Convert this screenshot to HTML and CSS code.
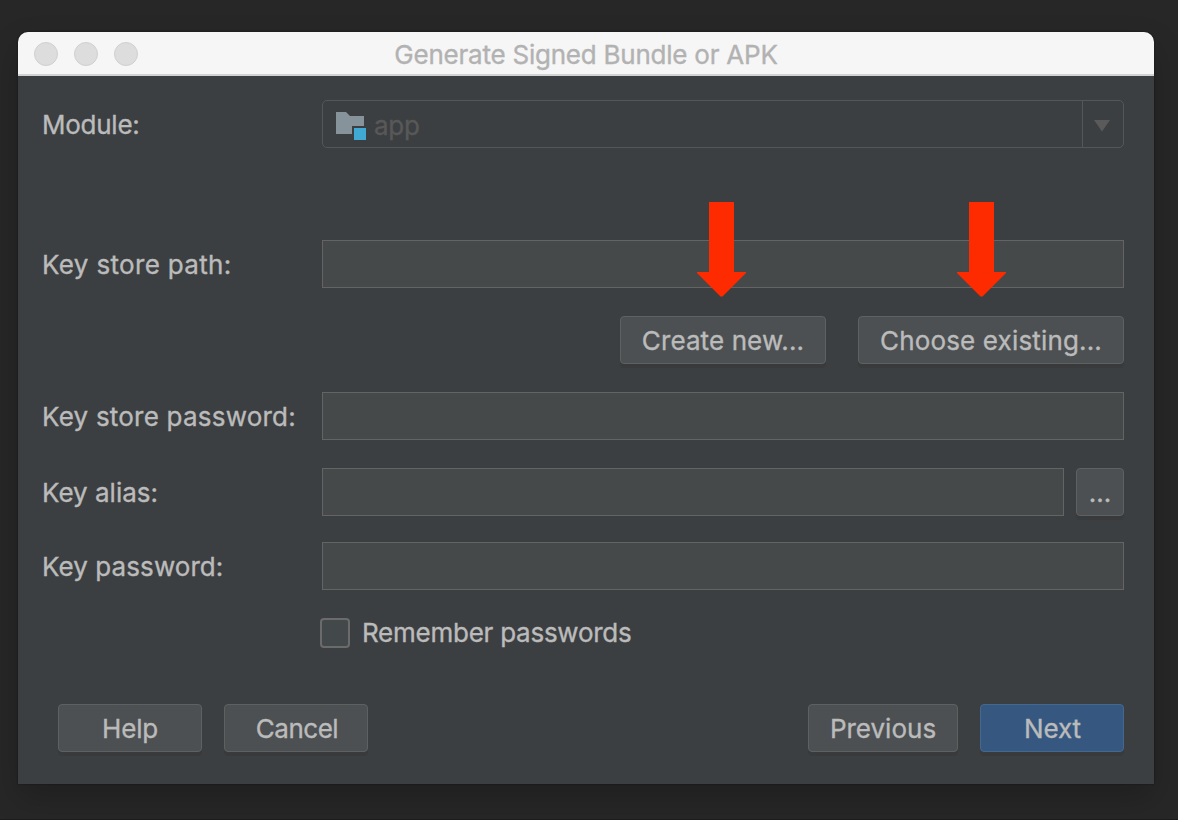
FILE: index.html
```html
<!DOCTYPE html>
<html lang="en">
<head>
<meta charset="utf-8">
<title>Generate Signed Bundle or APK</title>
<link rel="stylesheet" href="styles.css">
</head>
<body>
<main class="window">
  <header class="titlebar">
    <div class="lights"><i class="light"></i><i class="light"></i><i class="light"></i></div>
    <h1 class="title">Generate Signed Bundle or APK</h1>
  </header>
  <div class="content">
    <div class="row row-module">
      <span class="label"><span class="t-module">Module:</span></span>
      <div class="combo">
        <div class="combo-value">
          <svg class="folder" width="32" height="26" viewBox="0 0 32 26"><path fill="#87939a" d="M0 0h10l4 4h14v10H16v8H0z"/><path fill="#40a9d4" d="M18 16h12v12H18z"/></svg>
          <span class="t-app">app</span>
        </div>
        <div class="combo-arrow"><svg width="16" height="12" viewBox="0 0 16 12"><path fill="#5a5a5a" d="M0 0h16L8 11.5z"/></svg></div>
      </div>
    </div>
    <div class="row row-path">
      <span class="label"><span class="t-path">Key store path:</span></span>
      <div class="field"></div>
    </div>
    <div class="row row-actions">
      <div class="button create"><span class="t-create">Create new...</span>
        <svg class="arrow" width="50" height="95" viewBox="0 0 50 95"><path fill="#ff2b00" d="M12 0h25v70h12v1L25.500 94.500h-2L0 71v-1h12z"/></svg>
      </div>
      <div class="button choose"><span class="t-choose">Choose existing...</span>
        <svg class="arrow" width="50" height="95" viewBox="0 0 50 95"><path fill="#ff2b00" d="M12 0h25v70h12v1L25.500 94.500h-2L0 71v-1h12z"/></svg>
      </div>
    </div>
    <div class="row row-storepass">
      <span class="label"><span class="t-storepass">Key store password:</span></span>
      <div class="field"></div>
    </div>
    <div class="row row-alias">
      <span class="label"><span class="t-alias">Key alias:</span></span>
      <div class="field"></div>
      <div class="button more"><span class="t-more">...</span></div>
    </div>
    <div class="row row-keypass">
      <span class="label"><span class="t-keypass">Key password:</span></span>
      <div class="field"></div>
    </div>
    <div class="remember"><i class="checkbox"></i><span class="t-remember">Remember passwords</span></div>
    <footer class="footer">
      <div class="button small"><span class="t-help">Help</span></div>
      <div class="button small"><span class="t-cancel">Cancel</span></div>
      <div class="button previous"><span class="t-previous">Previous</span></div>
      <div class="button small primary"><span class="t-next">Next</span></div>
    </footer>
  </div>
</main>
</body>
</html>
```
FILE: styles.css
```css
* { box-sizing: border-box; }
body {
  margin: 0;
  height: 820px;
  padding: 32px 24px 0 18px;
  overflow: hidden;
  background: #272727;
  border-bottom: 1px solid #1c1c1c;
  font: 400 26px/32px Inter, "Liberation Sans", sans-serif;
  color: #bbb;
  white-space: nowrap;
  -webkit-text-stroke: .35px currentColor;
}
.window {
  height: 752px;
  background: #3c3f41;
  border-radius: 10px 10px 0 0;
  box-shadow: 0 0 2px rgba(0,0,0,.5), 0 14px 32px rgba(0,0,0,.2);
}
.titlebar {
  height: 44px;
  display: grid;
  grid-template-columns: 160px 1fr 160px;
  align-items: center;
  background: #f6f6f6;
  border-bottom: 2px solid #d2d2d2;
  border-radius: 10px 10px 0 0;
}
.lights { display: flex; gap: 16px; padding: 2px 0 0 16px; }
.light {
  width: 24px; height: 24px;
  border-radius: 50%;
  border: 1px solid #d0d0d0;
  background: #dddddd;
}
.title { margin: 0; font: inherit; color: #b2b2b2; text-align: center; padding-top: 3px; letter-spacing: -.23px; }
.content { padding: 24px 30px 0 24px; }
.row { display: flex; height: 48px; }
.label { width: 280px; flex: none; padding-top: 9px; }
.field { flex: 1; background: #45494a; border: 1px solid #646464; }
.combo { flex: 1; display: flex; border: 1px solid #555657; border-radius: 5px; color: #585858; }
.combo-value { flex: 1; display: flex; padding: 11px 0 0 13px; gap: 6px; }
.combo-value span { margin-top: -2px; }
.folder { overflow: visible; }
.combo-arrow { width: 41px; border-left: 1px solid #555657; padding: 3px 0 0 11px; display: flex; align-items: center; }
.row-path { margin-top: 92px; }
.row-actions { margin-top: 28px; justify-content: flex-end; gap: 32px; }
.row-storepass, .row-alias { margin-top: 28px; }
.row-keypass { margin-top: 26px; }
.button {
  position: relative;
  height: 48px;
  padding-top: 8px;
  text-align: center;
  background: #4c5052;
  border: 1px solid #5e6161;
  border-radius: 4px;
  box-shadow: 0 4px 0 #393a3b;
}
.create { width: 206px; }
.choose { width: 266px; }
.arrow { position: absolute; top: -115px; left: 76px; }
.choose .arrow { left: 98px; }
.more { width: 48px; margin-left: 12px; }
.small { width: 144px; }
.previous { width: 150px; margin-left: auto; }
.primary { background: #365880; border-color: #43698e; }
.remember { display: flex; align-items: center; height: 30px; margin: 28px 0 0 278px; gap: 12px; }
.checkbox { width: 30px; height: 30px; background: #43494a; border: 2px solid #6b6b6b; border-radius: 4px; }
.footer { display: flex; gap: 22px; margin-top: 56px; padding-left: 16px; }
.t-module { letter-spacing: -.25px; }
.t-app { letter-spacing: -.3px; }
.t-path { letter-spacing: .34px; }
.t-storepass { letter-spacing: .22px; }
.t-keypass { letter-spacing: .08px; }
.t-create { letter-spacing: .1px; }
.t-choose { letter-spacing: .16px; }
.t-remember { letter-spacing: -.25px; }
.t-help { letter-spacing: -.2px; }
.t-cancel { letter-spacing: -.5px; padding-left: 2px; }
.t-next { padding-left: 1px; letter-spacing: -.1px; }
```
